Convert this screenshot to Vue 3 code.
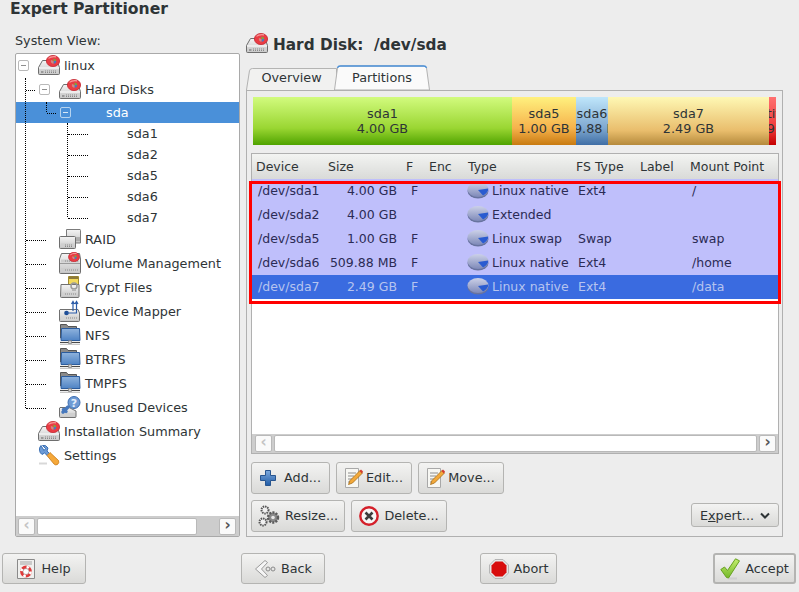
<template>
  <div class="window">
    <svg class="icon-defs" width="0" height="0">
      <defs>
        <linearGradient id="g-body" x1="0" y1="0" x2="0" y2="1">
          <stop offset="0" stop-color="#f4f4f4" />
          <stop offset="1" stop-color="#c4c4c4" />
        </linearGradient>
        <linearGradient id="g-folder" x1="0" y1="0" x2="0" y2="1">
          <stop offset="0" stop-color="#8fb3dd" />
          <stop offset="1" stop-color="#4f83c4" />
        </linearGradient>
        <linearGradient id="g-disc" x1="0" y1="0" x2="0" y2="1">
          <stop offset="0" stop-color="#ccd1e8" />
          <stop offset="1" stop-color="#7e89b8" />
        </linearGradient>
        <linearGradient id="g-plus" x1="0" y1="0" x2="0" y2="1">
          <stop offset="0" stop-color="#7eaade" />
          <stop offset="1" stop-color="#1f5ba6" />
        </linearGradient>
        <linearGradient id="g-check" x1="0" y1="0" x2="0" y2="1">
          <stop offset="0" stop-color="#c4ee6e" />
          <stop offset="1" stop-color="#74b82a" />
        </linearGradient>
        <symbol id="i-badge" viewBox="0 0 14 12">
          <ellipse cx="7" cy="6" rx="6.6" ry="5.6" fill="#ea3c44" stroke="#c42630" stroke-width="0.8" />
          <path d="M2.500 3.400Q5 1.200 10 1.800" fill="none" stroke="#f79a9a" stroke-width="1.200" />
          <path d="M7.500 6V3.500A2.800 2.800 0 0 1 10.300 6Z" fill="#7aa83f" />
          <path d="M7.500 6H10.300A2.800 2.800 0 0 1 7.500 8.800Z" fill="#4a78c2" />
          <path d="M7.500 6V8.800A2.800 2.800 0 0 1 5 5Z" fill="#d08a80" />
        </symbol>
        <symbol id="i-drive" viewBox="0 0 22 20">
          <path d="M4.500 5.500H19L21.500 12.500V18.500Q21.500 19.500 20.500 19.500H1.500Q.5 19.500 .5 18.500V12.500Z" fill="url(#g-body)" stroke="#6e6e6e" />
          <path d="M1 13H21" stroke="#fff" />
          <path d="M2 14.500H20V18.500H2Z" fill="#d0d0d0" />
          <path d="M7 16H19M7 17.500H19" stroke="#8a8a8a" stroke-dasharray="1 1" />
          <path d="M3 16H5.500V18H3Z" fill="#9a9a9a" />
        </symbol>
        <symbol id="i-disk" viewBox="0 0 22 20">
          <use href="#i-drive" width="22" height="20" />
          <use href="#i-badge" x="8" y="0" width="14" height="12" />
        </symbol>
        <symbol id="i-raid" viewBox="0 0 22 20">
          <path d="M7.500 .5H21Q21.500 .5 21.500 1.500V14H7.500Z" fill="url(#g-body)" stroke="#7b7b7b" />
          <path d="M17 9H21M17 11H21" stroke="#8a8a8a" />
          <path d="M.5 8.500Q.5 7.500 1.500 7.500H15.500Q16.500 7.500 16.500 8.500V18.500Q16.500 19.500 15.500 19.500H1.500Q.5 19.500 .5 18.500Z" fill="url(#g-body)" stroke="#6e6e6e" />
          <path d="M2 14.500H15V18H2Z" fill="#cfcfcf" />
          <path d="M6 16H14M6 17.500H14" stroke="#8a8a8a" stroke-dasharray="1 1" />
        </symbol>
        <symbol id="i-volume" viewBox="0 0 22 22">
          <path d="M2.500 1.500H20.500L21.500 7V20.500Q21.500 21.500 20.500 21.500H1.500Q.5 21.500 .5 20.500V7Z" fill="url(#g-body)" stroke="#6e6e6e" />
          <path d="M1 11.500H21" stroke="#9a9a9a" />
          <path d="M2 7.500H20V10.500H2ZM2 16H20V20H2Z" fill="#cdcdcd" />
          <path d="M6 9H19M6 18H19" stroke="#8a8a8a" stroke-dasharray="1 1" />
          <use href="#i-badge" x="9" y="0" width="12" height="10" />
        </symbol>
        <symbol id="i-crypt" viewBox="0 0 22 22">
          <path d="M9.500 .5H19.500V10H9.500Z" fill="#f2d95c" stroke="#a08a30" />
          <path d="M10 .5H19V3H10Z" fill="#8d7a3a" />
          <path d="M2 8.500H20V20.500Q20 21.500 19 21.500H2.500Q1.500 21.500 1.500 20.500Z" fill="url(#g-body)" stroke="#707070" />
          <path d="M3 16.500H18V20H3Z" fill="#d0d0d0" />
          <path d="M6 18H17" stroke="#8a8a8a" stroke-dasharray="1 1" />
          <circle cx="15" cy="10" r="3" fill="none" stroke="#9a9a9a" stroke-width="1.500" />
          <path d="M13 13H17V15H13Z" fill="#b5b5b5" />
        </symbol>
        <symbol id="i-mapper" viewBox="0 0 22 22">
          <path d="M1 9.500H19L20.500 13V20.500Q20.500 21.500 19.500 21.500H1.500Q.5 21.500 .5 20.500V10Z" fill="url(#g-body)" stroke="#707070" />
          <path d="M2 16.500H19V20H2Z" fill="#d4d4d4" />
          <path d="M7 18H18" stroke="#8a8a8a" stroke-dasharray="1 1" />
          <circle cx="7.500" cy="13" r="2.300" fill="#1f4e96" />
          <path d="M8 13H17.500V2M14 11V2M12.500 4 14 1.500 15.500 4M16 4 17.500 1.500 19 4" fill="none" stroke="#2a5ba8" stroke-width="1.200" />
        </symbol>
        <symbol id="i-folder" viewBox="0 0 22 22">
          <path d="M1.500 .5H7.500L9 2.500H17.500V14H1.500Z" fill="#8a8a8a" stroke="#555" />
          <path d="M2.500 4.500H20.500L21 16.500H2Z" fill="url(#g-folder)" stroke="#2b5c9e" />
          <path d="M1 18.500H21" stroke="#4a4a4a" stroke-width="1.200" />
          <path d="M9.500 16.500H12.500V19.500H9.500Z" fill="#c9c9c9" stroke="#777" stroke-width=".6" />
          <path d="M1 20.500H21" stroke="#c6c6c6" />
        </symbol>
        <symbol id="i-unused" viewBox="0 0 22 22">
          <path d="M1 11.500H10L17 15V20.500Q17 21.500 16 21.500H1.500Q.5 21.500 .5 20.500V12Z" fill="url(#g-body)" stroke="#707070" />
          <path d="M2 17H16V20.500H2Z" fill="#d0d0d0" />
          <path d="M7 15.500 4.500 13.500M9 11 4 16" stroke="#4678bd" stroke-width="3.500" stroke-linecap="round" />
          <circle cx="15" cy="6.500" r="6" fill="#6f9bd4" stroke="#3a6cb0" />
          <text x="15" y="10.500" text-anchor="middle" class="icon-mark">?</text>
        </symbol>
        <symbol id="i-settings" viewBox="0 0 22 22">
          <path d="M3 1.500A6 6 0 0 0 4 10.500L6.500 9 12 14 14 12 9 7 10 4Q8 .5 4.500 1.500L7.500 4.500 6 6.500Z" fill="#6d9bd6" stroke="#2f66ae" stroke-width=".9" />
          <path d="M9 11.500 12 8.500 20.500 16.500Q21.500 18.500 19.500 20.500 17.500 21.500 16 20Z" fill="#f5a83a" stroke="#c87a18" stroke-width=".8" />
          <path d="M1 19.500H9" stroke="#d8d8d8" stroke-width="2" />
        </symbol>
        <symbol id="i-part" viewBox="0 0 22 18">
          <ellipse cx="11" cy="10" rx="10.500" ry="7.500" fill="#68739f" />
          <ellipse cx="11" cy="8.500" rx="10.500" ry="7.500" fill="url(#g-disc)" />
          <path d="M11 9 21.200 7.500Q21.500 11.500 16 14.500Z" fill="#2a5bd0" />
        </symbol>
        <symbol id="i-plus" viewBox="0 0 16 16">
          <path d="M5.500 .5H10.500V5.500H15.500V10.500H10.500V15.500H5.500V10.500H.5V5.500H5.500Z" fill="url(#g-plus)" stroke="#28558f" />
        </symbol>
        <symbol id="i-edit" viewBox="0 0 18 20">
          <path d="M.5 .5H13.500V19.500H.5Z" fill="#f7f7f3" stroke="#a8a8a8" />
          <path d="M3 5H11M3 8H9M3 11H8M3 14H6" stroke="#8d8d8d" />
          <path d="M15 2.500 17.500 5 7.500 15 3.500 16.500 5 12.500Z" fill="#f3a93a" stroke="#a66c18" stroke-width=".8" />
          <path d="M14.500 3 16 1.500 18 3.500 16.800 5.500Z" fill="#d23c30" />
        </symbol>
        <symbol id="i-gears" viewBox="0 0 22 22">
          <circle cx="7" cy="5" r="3.500" fill="#f1f1f1" stroke="#555" stroke-width="2" stroke-dasharray="1.500 .8" />
          <circle cx="5" cy="17" r="3.500" fill="#f1f1f1" stroke="#555" stroke-width="2" stroke-dasharray="1.500 .8" />
          <circle cx="15" cy="12.500" r="5" fill="#8a8a8a" stroke="#5b5b5b" stroke-width="2.400" stroke-dasharray="2 1.200" />
          <circle cx="15" cy="12.500" r="1.800" fill="#e8e8e8" />
        </symbol>
        <symbol id="i-delete" viewBox="0 0 20 20">
          <circle cx="10" cy="10" r="8.700" fill="#f6f6f6" stroke="#d4202a" stroke-width="2.400" />
          <path d="M6.500 6.500 13.500 13.500M13.500 6.500 6.500 13.500" stroke="#3c3c3c" stroke-width="2.600" />
        </symbol>
        <symbol id="i-help" viewBox="0 0 18 20">
          <path d="M.5 .5H17.500V19.500H.5Z" fill="#f0f0ee" stroke="#8a8a8a" />
          <path d="M3 3H15M3 5H15" stroke="#a5a5a5" />
          <circle cx="9" cy="12.500" r="4.500" fill="#fff" stroke="#e03a3a" stroke-width="2.800" />
          <circle cx="9" cy="12.500" r="4.500" fill="none" stroke="#fff" stroke-width="2.800" stroke-dasharray="2.500 4.570" />
          <circle cx="9" cy="12.500" r="3" fill="none" stroke="#8a6a6a" stroke-width=".5" />
        </symbol>
        <symbol id="i-back" viewBox="0 0 22 20">
          <path d="M11 1.500 1.500 10 11 18.500 13.500 16.500 7.500 10 13.500 3.500Z" fill="#f5f5f5" stroke="#9a9a9a" />
          <circle cx="14" cy="10" r="2" fill="none" stroke="#8a8a8a" />
          <circle cx="19" cy="10" r="2" fill="none" stroke="#8a8a8a" />
        </symbol>
        <symbol id="i-abort" viewBox="0 0 20 20">
          <path d="M6 .5H14L19.500 6V14L14 19.500H6L.5 14V6Z" fill="#e6e6e6" stroke="#b5b5b5" />
          <path d="M6.500 2.500H13.500L17.500 6.500V13.500L13.500 17.500H6.500L2.500 13.500V6.500Z" fill="#d80c0c" />
        </symbol>
        <symbol id="i-accept" viewBox="0 0 20 22">
          <path d="M8 20.500H17" stroke="#cfcfcf" stroke-width="2" />
          <path d="M.8 11.500 4.500 9 7.500 12.500 15.500 .8 19.500 2.800 8.500 20 6.500 19.500Z" fill="url(#g-check)" stroke="#67a020" />
        </symbol>
      </defs>
    </svg>

    <h1 class="page-title">Expert Partitioner</h1>

    <div class="main">
      <section class="left-col">
        <label class="tree-label">System View:</label>
        <div class="tree-box">
          <div class="tree">
            <span class="vline vline-a"></span>
            <span class="vline vline-b"></span>
            <span class="vline vline-c"></span>
            <div
              v-for="row in treeRows"
              :key="row.label"
              :class="['tree-row', 'depth-' + row.depth, { short: row.short, selected: row.selected, connected: row.depth > 0 && row.depth < 3 }, row.link]"
            >
              <span class="expander-slot">
                <span v-if="row.open" class="expander"></span>
              </span>
              <span class="tree-icon">
                <svg v-if="row.icon" :width="row.icon[1]" :height="row.icon[2]"><use :href="'#' + row.icon[0]" /></svg>
              </span>
              <span class="tree-text">{{ row.label }}</span>
            </div>
          </div>
          <div class="scrollbar tree-scroll">
            <span class="scroll-btn off">‹</span>
            <span class="scroll-thumb tree-thumb"></span>
            <span class="scroll-gap"></span>
            <span class="scroll-btn">›</span>
          </div>
        </div>
      </section>

      <section class="right-col">
        <div class="heading">
          <svg width="22" height="20"><use href="#i-disk" /></svg>
          <h2>Hard Disk:&nbsp; /dev/sda</h2>
        </div>

        <div class="tabs">
          <div class="tab">
            <svg class="tab-shape" viewBox="0 0 92 23" preserveAspectRatio="none"><path d="M.5 23 3.500 3Q4 .5 6.500 .5H91.500V23" fill="#f1f1f0" stroke="#b0b0b0" /></svg>
            <span class="tab-text">Overview</span>
          </div>
          <div class="tab tab-active">
            <svg class="tab-shape" viewBox="0 0 96 26" preserveAspectRatio="none"><path d="M.5 26 3.500 3Q4 1 6.500 1H89.500Q92 1 92.500 3L95.500 26Z" fill="#fafafa" stroke="#b0b0b0" /><path d="M3.500 3Q4 1 6.500 1H89.500Q92 1 92.500 3" fill="none" stroke="#4a90d9" stroke-width="1.500" /></svg>
            <span>Partitions</span>
          </div>
        </div>

        <div class="tab-panel">
          <div class="partition-bar">
            <div v-for="p in partitions" :key="p.name" :class="['segment', p.kind]" :style="{ width: p.width + 'px' }">
              <span>{{ p.name }}</span>
              <span>{{ p.size }}</span>
            </div>
          </div>

          <div class="table-box">
            <div class="table-head cols">
              <span v-for="c in columns" :key="c">{{ c }}</span>
            </div>
            <div class="table-body">
              <div v-for="(d, i) in devices" :key="d.dev" :class="['table-row', 'cols', { active: i === 4 }]">
                <span class="cell">{{ d.dev }}</span>
                <span class="cell cell-size">{{ d.size }}</span>
                <span class="cell cell-f">{{ d.format ? 'F' : '' }}</span>
                <span class="cell"></span>
                <span class="cell-type">
                  <svg width="22" height="18"><use href="#i-part" /></svg>
                  {{ d.type }}
                </span>
                <span class="cell">{{ d.fs }}</span>
                <span class="cell"></span>
                <span class="cell">{{ d.mount }}</span>
              </div>
            </div>
            <div class="scrollbar table-scroll">
              <span class="scroll-btn off">‹</span>
              <span class="scroll-thumb table-thumb"></span>
              <span class="scroll-btn">›</span>
            </div>
            <div class="red-mark"></div>
          </div>

          <div class="button-row">
            <button class="btn btn-add"><svg width="16" height="16"><use href="#i-plus" /></svg><span>Add...</span></button>
            <button class="btn btn-edit"><svg width="18" height="20"><use href="#i-edit" /></svg><span>Edit...</span></button>
            <button class="btn btn-move"><svg width="18" height="20"><use href="#i-edit" /></svg><span>Move...</span></button>
          </div>
          <div class="button-row last-row">
            <button class="btn btn-resize"><svg width="22" height="22"><use href="#i-gears" /></svg><span>Resize...</span></button>
            <button class="btn btn-delete"><svg width="20" height="20"><use href="#i-delete" /></svg><span>Delete...</span></button>
            <button class="btn btn-expert">
              <span>E<u>x</u>pert...</span>
              <svg width="10" height="7" viewBox="0 0 10 7"><path d="M1 1.500 5 5.500 9 1.500" fill="none" stroke="#2e3436" stroke-width="2" /></svg>
            </button>
          </div>
        </div>
      </section>
    </div>

    <footer class="footer">
      <button class="btn foot-help"><svg width="18" height="20"><use href="#i-help" /></svg><span>Help</span></button>
      <button class="btn foot-back"><svg width="22" height="20"><use href="#i-back" /></svg><span>Back</span></button>
      <button class="btn foot-abort"><svg width="20" height="20"><use href="#i-abort" /></svg><span>Abort</span></button>
      <button class="btn foot-accept"><svg width="20" height="22"><use href="#i-accept" /></svg><span>Accept</span></button>
    </footer>
  </div>
</template>

<script setup>
const treeRows = [
  { label: "linux", depth: 0, open: true, icon: ["i-disk", 22, 20] },
  { label: "Hard Disks", depth: 1, open: true, icon: ["i-disk", 22, 20], link: "link-open" },
  { label: "sda", depth: 2, open: true, short: true, selected: true, link: "link-sda" },
  { label: "sda1", depth: 3, short: true, link: "link-part" },
  { label: "sda2", depth: 3, short: true, link: "link-part" },
  { label: "sda5", depth: 3, short: true, link: "link-part" },
  { label: "sda6", depth: 3, short: true, link: "link-part" },
  { label: "sda7", depth: 3, short: true, link: "link-part" },
  { label: "RAID", depth: 1, icon: ["i-raid", 22, 20] },
  { label: "Volume Management", depth: 1, icon: ["i-volume", 22, 22] },
  { label: "Crypt Files", depth: 1, icon: ["i-crypt", 22, 22] },
  { label: "Device Mapper", depth: 1, icon: ["i-mapper", 22, 22] },
  { label: "NFS", depth: 1, icon: ["i-folder", 22, 22] },
  { label: "BTRFS", depth: 1, icon: ["i-folder", 22, 22] },
  { label: "TMPFS", depth: 1, icon: ["i-folder", 22, 22] },
  { label: "Unused Devices", depth: 1, icon: ["i-unused", 22, 22] },
  { label: "Installation Summary", depth: 0, icon: ["i-disk", 22, 20] },
  { label: "Settings", depth: 0, icon: ["i-settings", 22, 22] },
];

const partitions = [
  { name: "sda1", size: "4.00 GB", width: 259, kind: "seg-green" },
  { name: "sda5", size: "1.00 GB", width: 64, kind: "seg-orange" },
  { name: "sda6", size: "509.88 MB", width: 32, kind: "seg-blue" },
  { name: "sda7", size: "2.49 GB", width: 161, kind: "seg-sand" },
  { name: "unpartitioned", size: "1.59 MB", width: 7, kind: "seg-red" },
];

const columns = ["Device", "Size", "F", "Enc", "Type", "FS Type", "Label", "Mount Point"];

const devices = [
  { dev: "/dev/sda1", size: "4.00 GB", format: true, type: "Linux native", fs: "Ext4", mount: "/" },
  { dev: "/dev/sda2", size: "4.00 GB", format: false, type: "Extended", fs: "", mount: "" },
  { dev: "/dev/sda5", size: "1.00 GB", format: true, type: "Linux swap", fs: "Swap", mount: "swap" },
  { dev: "/dev/sda6", size: "509.88 MB", format: true, type: "Linux native", fs: "Ext4", mount: "/home" },
  { dev: "/dev/sda7", size: "2.49 GB", format: true, type: "Linux native", fs: "Ext4", mount: "/data" },
];
</script>

<style>
html,
body {
  margin: 0;
  background: #ededed;
}
</style>

<style scoped>
.window {
  width: 799px;
  height: 592px;
  overflow: hidden;
  display: flex;
  flex-direction: column;
  background: #ededed;
  color: #2e3436;
  font-family: "DejaVu Sans", sans-serif;
  font-size: 12.8px;
}
.icon-defs {
  position: absolute;
}
.icon-mark {
  font-family: "DejaVu Sans", sans-serif;
  font-size: 11px;
  font-weight: bold;
  fill: #e4eefa;
}
.page-title {
  margin: 0;
  height: 33px;
  padding: 0 0 0 10px;
  font-size: 15.6px;
  font-weight: bold;
  line-height: 19px;
}
.main {
  display: flex;
  height: 504px;
  padding-left: 15px;
  gap: 5px;
}

.left-col {
  width: 225px;
  display: flex;
  flex-direction: column;
}
.tree-label {
  height: 20px;
  line-height: 16px;
}
.tree-box {
  height: 484px;
  box-sizing: border-box;
  display: flex;
  flex-direction: column;
  border: 1px solid #a9a9a9;
  border-radius: 2px;
  background: #fff;
}
.tree {
  position: relative;
  flex: 1;
}
.tree-row {
  position: relative;
  height: 24px;
  box-sizing: border-box;
  padding-bottom: 2px;
  display: flex;
  align-items: center;
  white-space: nowrap;
}
.tree-row.short {
  height: 21px;
  padding-bottom: 0;
}
.tree-row.selected {
  background: #4a90d9;
  color: #fff;
}
.depth-1 { padding-left: 21px; }
.depth-2 { padding-left: 42px; }
.depth-3 { padding-left: 63px; }
.expander-slot {
  width: 22px;
  flex: none;
  display: flex;
  padding-left: 2px;
  box-sizing: border-box;
}
.expander {
  position: relative;
  width: 11px;
  height: 11px;
  box-sizing: border-box;
  border: 1px solid #b9b9b9;
  border-radius: 2px;
}
.expander::after {
  content: "";
  position: absolute;
  left: 2px;
  right: 2px;
  top: 4px;
  height: 1px;
  background: #8f8f8f;
}
.selected .expander {
  border-color: #b5d3ef;
}
.selected .expander::after {
  background: #d8e8f7;
}
.tree-icon {
  width: 22px;
  height: 22px;
  flex: none;
  margin-right: 4px;
  display: flex;
  align-items: center;
}
.vline {
  position: absolute;
  z-index: 1;
  width: 0;
  border-left: 1px dotted #000;
}
.vline-a { left: 9px; top: 24px; height: 330px; }
.vline-b { left: 30px; top: 48px; height: 10px; }
.vline-c { left: 51px; top: 69px; height: 94px; }
.connected::before,
.link-part::before {
  content: "";
  position: absolute;
  z-index: 1;
  top: 50%;
  left: 10px;
  width: 20px;
  border-top: 1px dotted #000;
}
.link-open::before {
  width: 9px;
}
.link-sda::before {
  left: 31px;
  width: 9px;
}
.link-part::before {
  left: 52px;
  width: 20px;
}

.scrollbar {
  display: flex;
  align-items: center;
  box-sizing: border-box;
  background: #cdcdcd;
}
.tree-scroll {
  height: 20px;
  padding: 0 3px 0 2px;
  gap: 2px;
}
.scroll-btn {
  width: 17px;
  height: 17px;
  flex: none;
  box-sizing: border-box;
  border: 1px solid #b9b9b9;
  border-radius: 2px;
  background: #fafafa;
  color: #555;
  font-size: 15px;
  font-weight: bold;
  line-height: 13px;
  text-align: center;
}
.scroll-btn.off {
  color: #c4c4c4;
}
.scroll-thumb {
  height: 17px;
  box-sizing: border-box;
  border: 1px solid #b9b9b9;
  border-radius: 2px;
  background: #fff;
}
.tree-thumb {
  width: 160px;
}
.scroll-gap {
  flex: 1;
}

.right-col {
  width: 537px;
  margin-left: 1px;
  display: flex;
  flex-direction: column;
}
.heading {
  height: 33px;
  display: flex;
  align-items: flex-start;
  gap: 5px;
}
.heading h2 {
  margin: 0;
  font-size: 15.3px;
  font-weight: bold;
  line-height: 24px;
}
.tabs {
  height: 24px;
  display: flex;
  align-items: flex-end;
  position: relative;
  z-index: 1;
}
.tab {
  position: relative;
  width: 91px;
  height: 22px;
  display: flex;
  align-items: center;
  justify-content: center;
}
.tab span {
  position: relative;
}
.tab .tab-text {
  top: -2px;
}
.tab-shape {
  position: absolute;
  inset: 0;
  width: 100%;
  height: 100%;
}
.tab-active {
  width: 96px;
  height: 25px;
  margin-left: -3px;
}
.tab-panel {
  height: 447px;
  box-sizing: border-box;
  border: 1px solid #b0b0b0;
  padding: 6px 3px 0 4px;
}
.partition-bar {
  display: flex;
  height: 48px;
  margin-left: 2px;
}
.segment {
  flex: none;
  overflow: hidden;
  display: flex;
  flex-direction: column;
  align-items: center;
  justify-content: center;
  line-height: 15px;
  white-space: nowrap;
}
.segment span {
  flex: none;
}
.seg-green { background: linear-gradient(#d2fb7e, #9ad632 65%, #4fa300); }
.seg-orange { background: linear-gradient(#fff17e, #f6b24c 65%, #c87a10); }
.seg-blue { background: linear-gradient(#bfe6fb, #7fa8d0 65%, #3f6ea5); }
.seg-sand { background: linear-gradient(#fef8b4, #e9bd6c 70%, #b58a3c); }
.seg-red { background: linear-gradient(#ff7070, #ee3a3a 65%, #c40000); }

.table-box {
  position: relative;
  height: 301px;
  box-sizing: border-box;
  margin-top: 8px;
  display: flex;
  flex-direction: column;
  border: 1px solid #b0b0b0;
  background: #fff;
  font-size: 12.5px;
}
.cols {
  display: grid;
  grid-template-columns: 72px 78px 23px 39px 108px 64px 50px 1fr;
  padding-left: 2px;
}
.table-head {
  height: 25px;
  align-items: center;
  background: linear-gradient(#f3f4f2, #d9dad8);
}
.table-head span {
  padding-left: 2px;
}
.table-body {
  flex: 1;
}
.table-row {
  height: 24px;
  box-sizing: border-box;
  padding-bottom: 2px;
  align-items: center;
  background: #bfbffb;
  color: #2b2b55;
}
.table-row.active {
  background: #3a6be0;
  color: #b6c4ef;
}
.cell {
  padding-left: 4px;
  white-space: nowrap;
}
.cell-size {
  padding: 0 7px 0 0;
  text-align: right;
}
.cell-f {
  padding-left: 7px;
}
.cell-type {
  display: flex;
  align-items: center;
  gap: 3px;
  padding-left: 1px;
  white-space: nowrap;
}
.table-scroll {
  height: 19px;
  padding: 0 2px 0 3px;
  gap: 2px;
}
.table-thumb {
  flex: 1;
}
.red-mark {
  position: absolute;
  left: -3px;
  top: 27px;
  width: 532px;
  height: 123px;
  box-sizing: border-box;
  border: 3px solid #f00;
}

.button-row {
  display: flex;
  gap: 6px;
  margin-top: 8px;
}
.last-row {
  margin-top: 6px;
}
.btn {
  height: 32px;
  box-sizing: border-box;
  display: flex;
  align-items: center;
  justify-content: center;
  gap: 6px;
  padding: 0;
  border: 1px solid #b4b4b2;
  border-radius: 3px;
  background: linear-gradient(#f3f3f2, #dadad8);
  color: #2e3436;
  font: inherit;
}
.tab-panel .btn span {
  padding-bottom: 2px;
}
.btn-add { width: 79px; gap: 8px; }
.btn-edit { width: 76px; gap: 3px; }
.btn-move { width: 86px; gap: 3px; }
.btn-resize { width: 94px; gap: 5px; }
.btn-delete { width: 96px; gap: 5px; }
.btn-expert {
  width: 88px;
  height: 24px;
  margin: 3px 0 0 auto;
  gap: 6px;
}
.tab-panel .btn-expert span {
  padding-bottom: 0;
}

.footer {
  flex: 1;
  display: flex;
  padding: 16px 0 0 2px;
}
.footer .btn {
  height: 31px;
}
.foot-help { width: 84px; gap: 6px; }
.foot-back { width: 84px; margin-left: 155px; gap: 5px; }
.foot-abort { width: 77px; margin-left: 155px; gap: 5px; }
.foot-accept {
  width: 83px;
  margin-left: 156px;
  gap: 5px;
  border-width: 2px;
}
</style>
